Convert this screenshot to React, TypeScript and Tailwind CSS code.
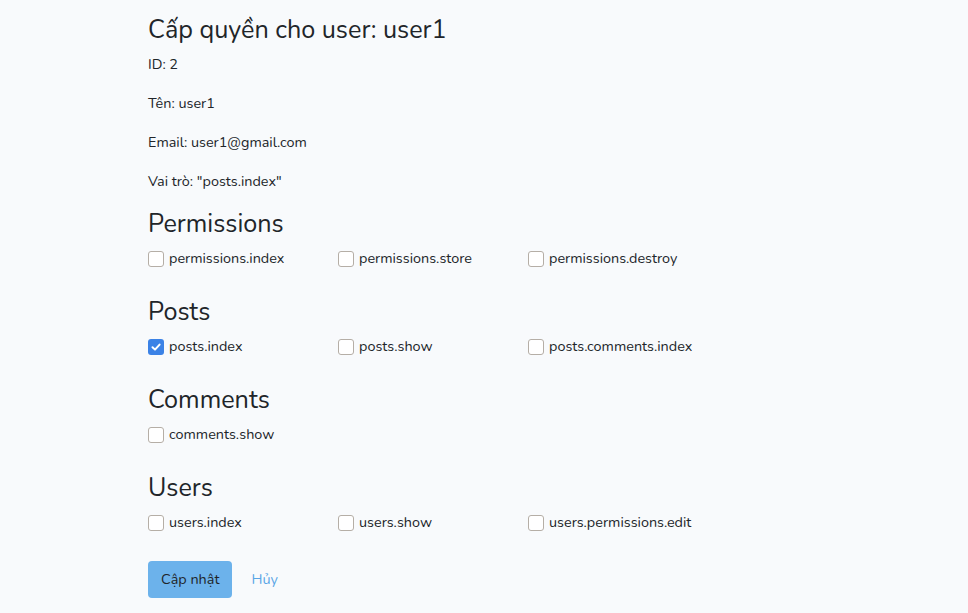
import React from "react";

interface Group {
  title: string;
  items: string[];
}

const groups: Group[] = [
  { title: "Permissions", items: ["permissions.index", "permissions.store", "permissions.destroy"] },
  { title: "Posts", items: ["posts.index", "posts.show", "posts.comments.index"] },
  { title: "Comments", items: ["comments.show"] },
  { title: "Users", items: ["users.index", "users.show", "users.permissions.edit"] },
];

const checked = ["posts.index"];

const Box: React.FC<{ on: boolean }> = ({ on }) =>
  on ? (
    <span className="w-4 h-4 rounded-[3px] bg-[#3b82e6] flex items-center justify-center shrink-0">
      <svg width="12" height="12" viewBox="0 0 12 12">
        <path d="M2.5 6.2 L5 8.6 L9.6 3.6" fill="none" stroke="#fff" strokeWidth="2" strokeLinecap="round" strokeLinejoin="round" />
      </svg>
    </span>
  ) : (
    <span className="w-4 h-4 rounded-[3px] border border-[#b5aea6] bg-white shrink-0" />
  );

export default function App() {
  return (
    <div className="min-h-screen bg-[#f8fafc] text-[#212529] font-['Nunito','Lato',sans-serif] text-[14.4px] leading-[23px]">
      <div className="pl-[148px] pt-[15px]">
        <h3 className="text-[25.2px] leading-[30px] mb-2">Cấp quyền cho user: user1</h3>
        <p className="mb-4">ID: 2</p>
        <p className="mb-4">Tên: user1</p>
        <p className="mb-4">Email: user1@gmail.com</p>
        <p className="mb-4">Vai trò: "posts.index"</p>

        {groups.map((g) => (
          <div key={g.title} className="mb-[27px]">
            <h3 className="text-[25.2px] leading-[30px] mb-2">{g.title}</h3>
            <div className="flex">
              {g.items.map((it) => (
                <label key={it} className="w-[190px] flex items-center gap-[5px]">
                  <Box on={checked.includes(it)} />
                  <span>{it}</span>
                </label>
              ))}
            </div>
          </div>
        ))}

        <div className="flex items-center gap-[19px]">
          <button className="bg-[#6cb2eb] rounded-[4px] px-[13px] py-[7px] leading-[23px] text-[#212529]">Cập nhật</button>
          <a className="text-[#5aa6e6]">Hủy</a>
        </div>
      </div>
    </div>
  );
}
